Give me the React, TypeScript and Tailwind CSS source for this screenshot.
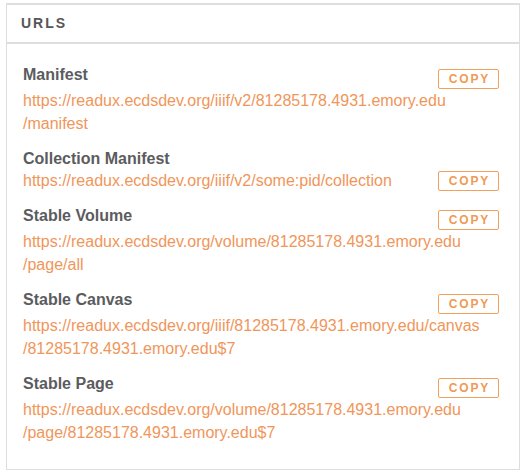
import React from 'react';

interface UrlItem {
  label: string;
  lines: string[];
  copyOnLabel: boolean;
}

const items: UrlItem[] = [
  {
    label: 'Manifest',
    lines: ['https://readux.ecdsdev.org/iiif/v2/81285178.4931.emory.edu', '/manifest'],
    copyOnLabel: true,
  },
  {
    label: 'Collection Manifest',
    lines: ['https://readux.ecdsdev.org/iiif/v2/some:pid/collection'],
    copyOnLabel: false,
  },
  {
    label: 'Stable Volume',
    lines: ['https://readux.ecdsdev.org/volume/81285178.4931.emory.edu', '/page/all'],
    copyOnLabel: true,
  },
  {
    label: 'Stable Canvas',
    lines: ['https://readux.ecdsdev.org/iiif/81285178.4931.emory.edu/canvas', '/81285178.4931.emory.edu$7'],
    copyOnLabel: true,
  },
  {
    label: 'Stable Page',
    lines: ['https://readux.ecdsdev.org/volume/81285178.4931.emory.edu', '/page/81285178.4931.emory.edu$7'],
    copyOnLabel: true,
  },
];

const CopyButton = ({ className = '' }: { className?: string }) => (
  <button
    className={`shrink-0 w-[61px] h-5 flex items-center justify-center border border-[#f2a05c] rounded-[2px] bg-white text-[#f09a55] text-[12px] font-bold tracking-[1.8px] leading-none pl-[1.8px] ${className}`}
  >
    COPY
  </button>
);

const UrlLines = ({ lines }: { lines: string[] }) => (
  <a href="#" className="block text-[#f0965a] text-[16px] leading-[23px]">
    {lines.map((l) => (
      <span key={l} className="block">
        {l}
      </span>
    ))}
  </a>
);

export default function App() {
  return (
    <div
      className="w-[528px] h-[470px] bg-white pt-[3px] pl-[6px]"
      style={{ fontFamily: '"Liberation Sans", Arial, Helvetica, sans-serif' }}
    >
      <div className="w-[514px] h-[467px] border-x border-b border-t-2 border-[#dedede] flex flex-col">
        {/* Header */}
        <div className="h-[39px] border-b-2 border-[#dedede] flex items-center pl-[14px]">
          <span className="text-[14px] font-bold tracking-[2px] text-[#555659]">URLS</span>
        </div>

        {/* URL list */}
        <dl className="pt-5 pl-4 pr-5 flex flex-col gap-[13px]">
          {items.map((item) => (
            <div key={item.label}>
              {item.copyOnLabel ? (
                <>
                  <div className="flex items-start justify-between">
                    <dt className="text-[16px] leading-[21px] font-bold text-[#5b5c5e]">{item.label}</dt>
                    <CopyButton className="mt-[5px]" />
                  </div>
                  <dd>
                    <UrlLines lines={item.lines} />
                  </dd>
                </>
              ) : (
                <>
                  <dt className="text-[16px] leading-[21px] font-bold text-[#5b5c5e]">{item.label}</dt>
                  <dd className="flex items-start justify-between">
                    <UrlLines lines={item.lines} />
                    <CopyButton className="mt-[2px]" />
                  </dd>
                </>
              )}
            </div>
          ))}
        </dl>
      </div>
    </div>
  );
}
